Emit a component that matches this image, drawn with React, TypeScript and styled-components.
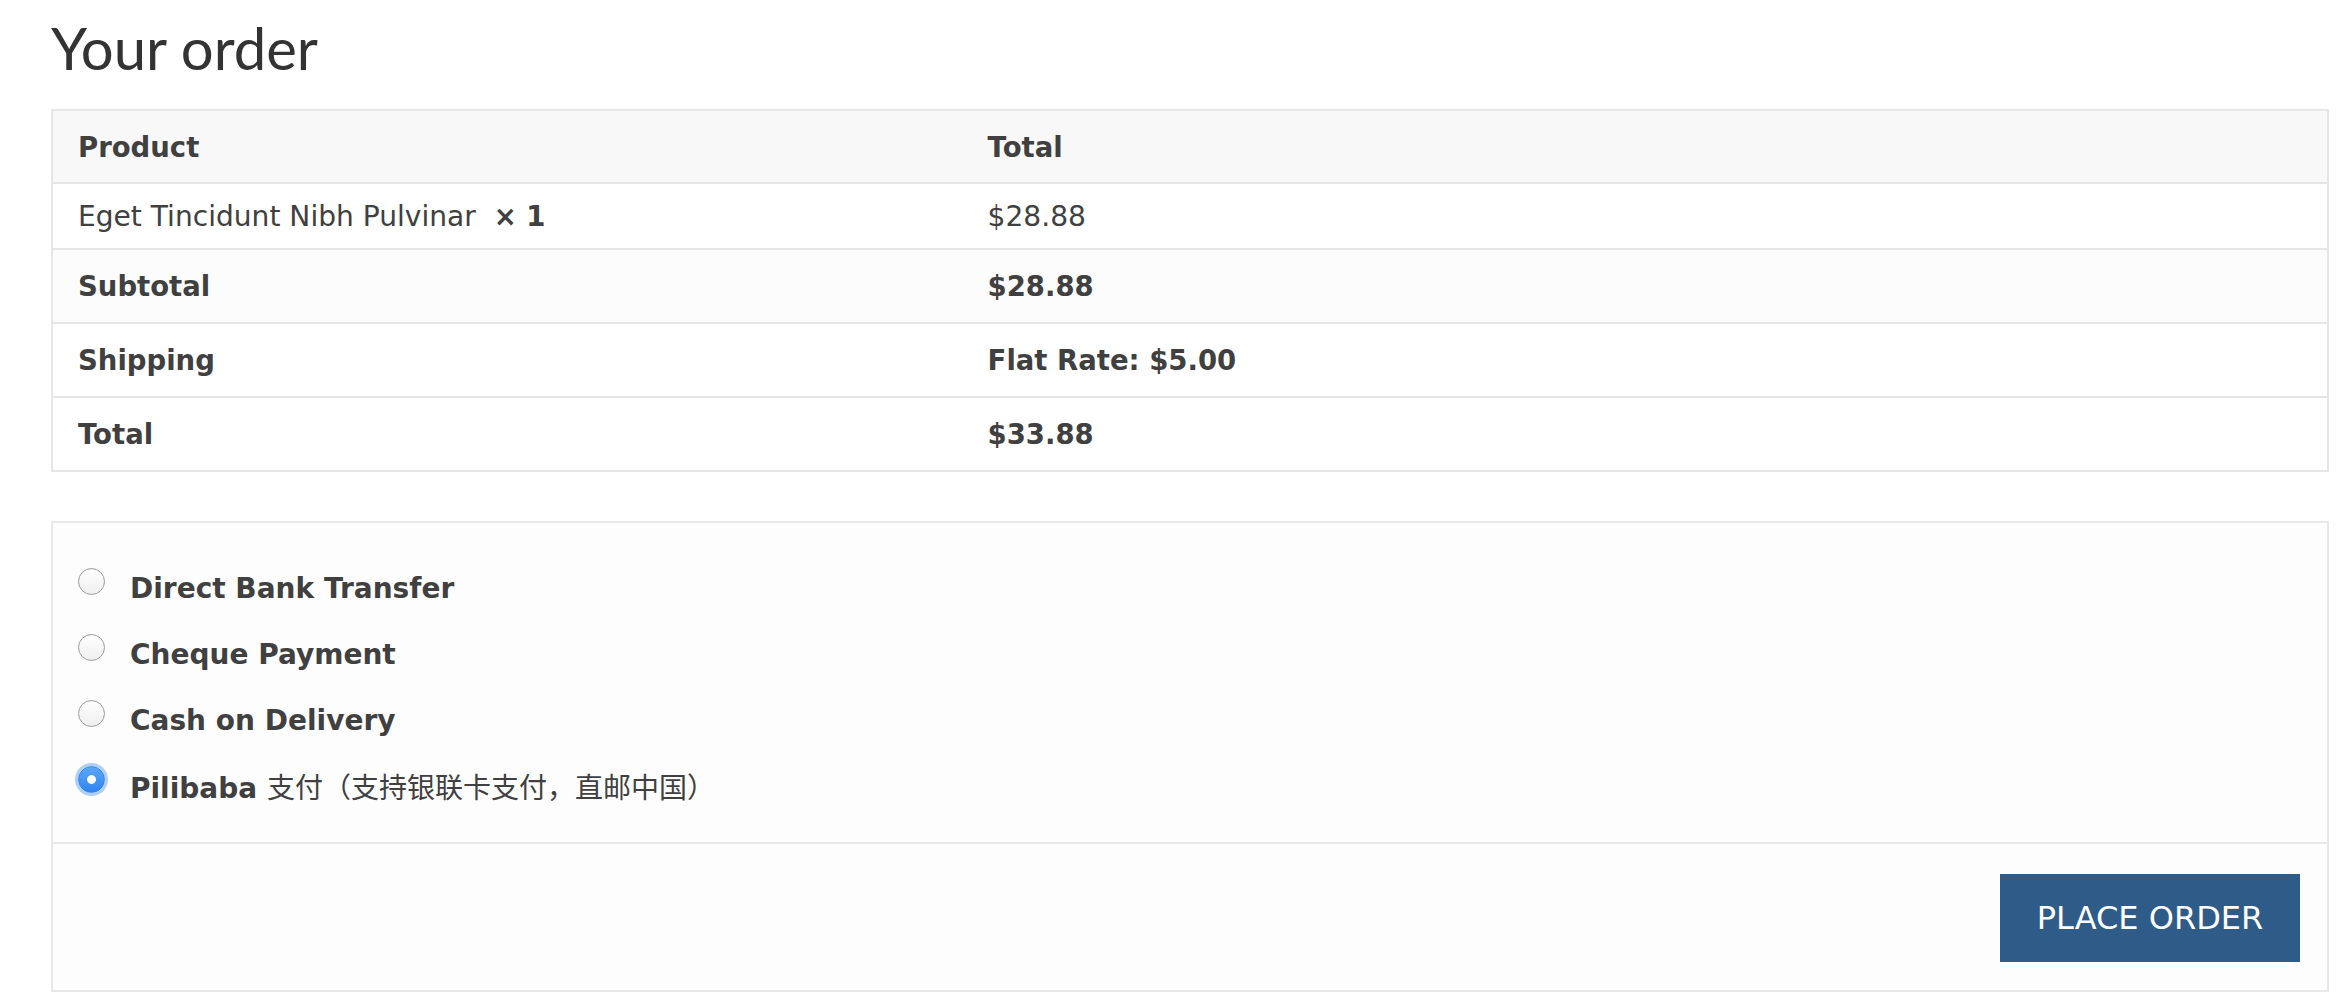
import React from 'react';
import styled, { createGlobalStyle } from 'styled-components';

const GlobalStyle = createGlobalStyle`
  html, body {
    margin: 0;
    padding: 0;
    background: #ffffff;
  }
  body {
    font-family: "DejaVu Sans", "Noto Sans CJK SC", sans-serif;
    color: #404040;
  }
  * { box-sizing: border-box; }
`;

const Page = styled.div`
  padding: 0 17px 0 51px;
`;

const Title = styled.h3`
  margin: 14px 0 27px 0;
  font-family: Lato, "Liberation Sans", sans-serif;
  font-weight: 400;
  font-size: 58px;
  line-height: 68px;
  color: #333333;
`;

const OrderTable = styled.table`
  width: 100%;
  border-collapse: separate;
  border-spacing: 0;
  border: 2px solid #e6e6e6;
  border-bottom: none;
  table-layout: fixed;
  font-size: 27.5px;
`;

const Row = styled.tr<{ $bg?: string }>`
  background: ${(p) => p.$bg ?? '#ffffff'};
`;

const Cell = styled.td<{ $h: number; $bold?: boolean; $w?: string }>`
  height: ${(p) => p.$h}px;
  width: ${(p) => p.$w ?? 'auto'};
  padding: 0 25px;
  border-bottom: 2px solid #e6e6e6;
  text-align: left;
  vertical-align: middle;
  font-size: ${(p) => (p.$bold ? '27.5px' : '28.1px')};
  font-weight: ${(p) => (p.$bold ? 700 : 400)};
  color: #404040;
  white-space: nowrap;
`;

const HeadCell = styled(Cell).attrs({ as: 'th' })``;

const Qty = styled.strong`
  font-size: 27.5px;
  font-weight: 700;
`;

const PaymentBox = styled.div`
  margin-top: 49px;
  border: 2px solid #e8e8e8;
  background: #fdfdfd;
`;

const MethodList = styled.ul`
  list-style: none;
  margin: 0;
  padding: 32px 0 23px;
`;

const MethodItem = styled.li`
  display: flex;
  align-items: center;
  height: 66px;
`;

const Radio = styled.input.attrs({ type: 'radio', name: 'payment_method' })`
  appearance: none;
  -webkit-appearance: none;
  flex: none;
  width: 27px;
  height: 27px;
  margin: 0 25px 13px 25px;
  border-radius: 50%;
  border: 1.5px solid #9c9c9c;
  background: linear-gradient(#ffffff, #efefef);
  box-shadow: inset 0 1px 1px rgba(0, 0, 0, 0.05);

  &:checked {
    border: 1px solid #3282ea;
    background:
      radial-gradient(circle at center, #ffffff 0 4px, transparent 4.8px),
      linear-gradient(#5ba7f8, #2f84ee);
    box-shadow: 0 0 0 3px rgba(125, 175, 240, 0.6);
  }
`;

const MethodLabel = styled.label`
  font-size: 28px;
  font-weight: 700;
  color: #404040;
  white-space: nowrap;
`;

const CnText = styled.span`
  font-family: "Noto Sans CJK SC", "DejaVu Sans", sans-serif;
  font-size: 28px;
  font-weight: 400;
`;

const PlaceOrderRow = styled.div`
  display: flex;
  justify-content: flex-end;
  border-top: 2px solid #e8e8e8;
  padding: 30px 27px 28px;
`;

const PlaceOrderButton = styled.button`
  width: 300px;
  height: 88px;
  border: none;
  border-radius: 0;
  background: #2e5b87;
  color: #ffffff;
  font-family: "DejaVu Sans", sans-serif;
  font-size: 32px;
  font-weight: 400;
  cursor: pointer;
`;

const methods = [
  { id: 'bacs', label: 'Direct Bank Transfer' },
  { id: 'cheque', label: 'Cheque Payment' },
  { id: 'cod', label: 'Cash on Delivery' },
];

export default function App() {
  return (
    <>
      <GlobalStyle />
      <Page>
        <Title>Your order</Title>
        <OrderTable>
          <thead>
            <Row $bg="#f8f8f8">
              <HeadCell $h={73} $bold $w="40%">Product</HeadCell>
              <HeadCell $h={73} $bold>Total</HeadCell>
            </Row>
          </thead>
          <tbody>
            <Row>
              <Cell $h={66}>
                Eget Tincidunt Nibh Pulvinar{'\u00a0 '}
                <Qty>× 1</Qty>
              </Cell>
              <Cell $h={66}>$28.88</Cell>
            </Row>
          </tbody>
          <tfoot>
            <Row $bg="#fcfcfc">
              <Cell $h={74} $bold>Subtotal</Cell>
              <Cell $h={74} $bold>$28.88</Cell>
            </Row>
            <Row>
              <Cell $h={74} $bold>Shipping</Cell>
              <Cell $h={74} $bold>Flat Rate: $5.00</Cell>
            </Row>
            <Row>
              <Cell $h={74} $bold>Total</Cell>
              <Cell $h={74} $bold>$33.88</Cell>
            </Row>
          </tfoot>
        </OrderTable>

        <PaymentBox>
          <MethodList>
            {methods.map((m) => (
              <MethodItem key={m.id}>
                <Radio id={m.id} value={m.id} />
                <MethodLabel htmlFor={m.id}>{m.label}</MethodLabel>
              </MethodItem>
            ))}
            <MethodItem>
              <Radio id="pilibaba" value="pilibaba" defaultChecked />
              <MethodLabel htmlFor="pilibaba">
                Pilibaba <CnText>支付（支持银联卡支付，直邮中国）</CnText>
              </MethodLabel>
            </MethodItem>
          </MethodList>
          <PlaceOrderRow>
            <PlaceOrderButton type="button">PLACE ORDER</PlaceOrderButton>
          </PlaceOrderRow>
        </PaymentBox>
      </Page>
    </>
  );
}
